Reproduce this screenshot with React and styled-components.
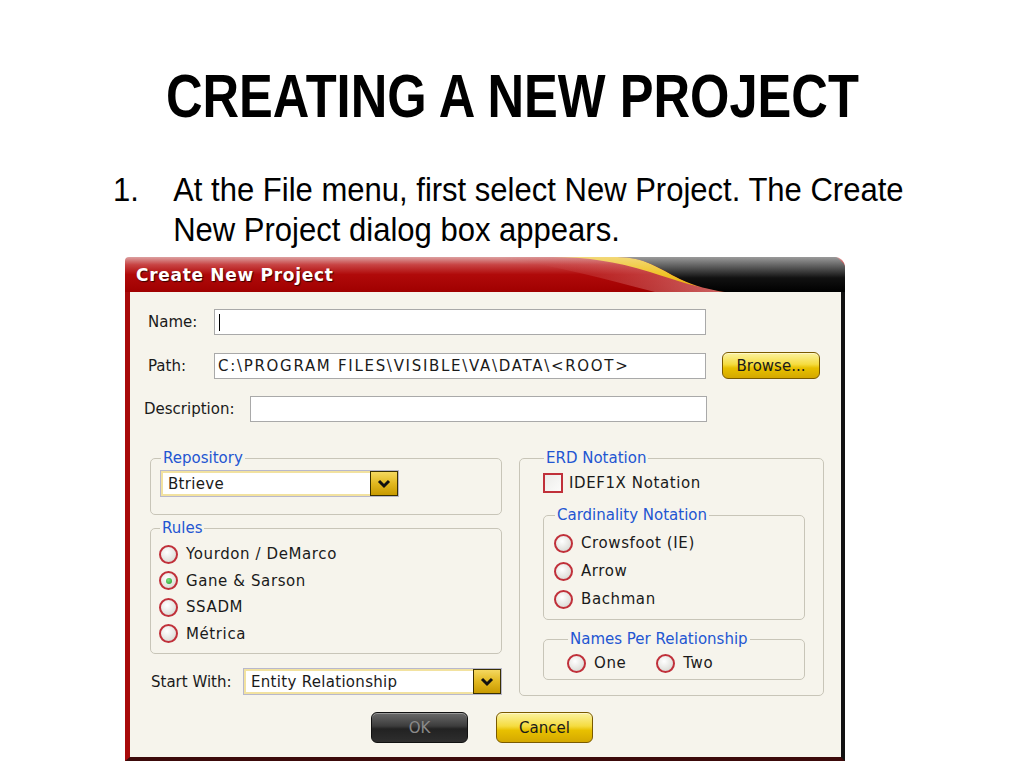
import React from 'react';
import styled, { createGlobalStyle, css } from 'styled-components';

const GlobalStyle = createGlobalStyle`
    body {
        margin: 0;
        background: #ffffff;
    }
`;

const Page = styled.div`
    width: 1024px;
    height: 768px;
    overflow: hidden;
    font-family: "Liberation Sans", Arial, sans-serif;
    color: #000;
`;

const Heading = styled.h1`
    margin: 0;
    padding-top: 60px;
    height: 72px;
    text-align: center;
    font-size: 61px;
    line-height: 72px;
    font-weight: 700;
`;

// the slide font is a narrow one, so the wider Liberation face is squeezed
const Narrow = styled.span`
    display: inline-block;
    transform: scaleX(${p => p.$scale});
    transform-origin: ${p => p.$origin || 'center'};
`;

const Step = styled(Narrow)`
    display: flex;
    margin: 38px 0 0 113px;
    width: 860px;
    font-size: 33px;
    line-height: 40px;
`;

const StepNumber = styled.span`
    width: 64px;
    flex: none;
`;

const Dialog = styled.div`
    width: 720px;
    height: 504px;
    margin: 7px 0 0 125px;
    display: flex;
    flex-direction: column;
    border-radius: 4px 10px 0 0;
    overflow: hidden;
    font-family: "DejaVu Sans", sans-serif;
    font-size: 15px;
    color: #1a1a1a;
`;

const TitleBar = styled.div`
    position: relative;
    height: 35px;
    flex: none;
    background: linear-gradient(#dca0a0 0%, #c84444 22%, #b00a0a 50%, #a00000 100%);
`;

const Swoosh = styled.svg`
    position: absolute;
    inset: 0;
    width: 100%;
    height: 100%;
`;

const TitleText = styled.span`
    position: relative;
    display: block;
    padding: 8px 0 0 11px;
    font-weight: 700;
    font-size: 17px;
    letter-spacing: 0.7px;
    color: #fff;
    text-shadow: 1px 1px 1px #3a0000;
`;

const Body = styled.div`
    flex: 1;
    display: flex;
    flex-direction: column;
    background: #f6f4ec;
    border-left: 5px solid #a80a0a;
    border-right: 4px solid #111;
    border-bottom: 4px solid #3c0a0a;
    padding: 17px 16px 0 13px;
`;

const FieldRow = styled.div`
    display: flex;
    align-items: center;
    margin-bottom: 17px;
    padding-left: ${p => p.$indent || 5}px;
`;

const Label = styled.span`
    width: ${p => p.$width}px;
    flex: none;
`;

const TextBox = styled.div`
    width: ${p => p.$width}px;
    height: 26px;
    box-sizing: border-box;
    border: 1px solid #a9a9a9;
    background: #fff;
    display: flex;
    align-items: center;
    padding-left: 3px;
    font-size: 15px;
    letter-spacing: ${p => p.$spaced ? 1.7 : 0.3}px;
`;

const Caret = styled.span`
    width: 1px;
    height: 17px;
    background: #000;
    margin-left: 1px;
`;

const GoldButton = styled.button`
    box-sizing: border-box;
    width: ${p => p.$width}px;
    height: ${p => p.$height}px;
    margin-left: ${p => p.$ml || 0}px;
    border-radius: 6px;
    font-family: "DejaVu Sans", sans-serif;
    font-size: 15px;
    padding: 0;
    cursor: pointer;
    ${p => p.$dark ? css`
        border: 1px solid #111;
        background: linear-gradient(#6a6a6a 0%, #3c3c3c 45%, #222 55%, #2e2e2e 100%);
        color: #8a8a8a;
        box-shadow: inset 0 1px 0 #999;
    ` : css`
        border: 1px solid #7a5a00;
        background: linear-gradient(#fbf2a0 0%, #f5dc40 45%, #e8c000 60%, #d4a800 100%);
        color: #1a1a1a;
        box-shadow: inset 0 1px 0 #fff8c8;
    `}
`;

const Columns = styled.div`
    display: grid;
    grid-template-columns: 352px 305px;
    column-gap: 17px;
    padding-left: 7px;
    margin-top: 11px;
`;

const Column = styled.div`
    display: flex;
    flex-direction: column;
`;

const Group = styled.fieldset`
    margin: ${p => p.$mt || 0}px 0 0 0;
    padding: ${p => p.$pad || '6px 9px 10px'};
    border: 1px solid #c8c5b8;
    border-radius: 5px;
    min-width: 0;
    height: ${p => p.$height}px;
    box-sizing: border-box;
    display: flex;
    flex-direction: ${p => p.$row ? 'row' : 'column'};
`;

const Legend = styled.legend`
    color: #2356d2;
    padding: 0 2px;
    margin-left: 1px;
    line-height: 16px;
    font-size: 15px;
`;

const Select = styled.div`
    display: flex;
    width: ${p => p.$width}px;
    height: 27px;
    box-sizing: border-box;
    border: 1px solid #b8b8cc;
`;

const SelectValue = styled.div`
    flex: 1;
    display: flex;
    align-items: center;
    padding-left: 5px;
    background: #fff;
    border: 2px solid #f2e2a0;
    border-right: none;
    letter-spacing: 0.3px;
`;

const SelectArrow = styled.div`
    width: 28px;
    flex: none;
    display: flex;
    align-items: center;
    justify-content: center;
    background: linear-gradient(#f4d860 0%, #e2b820 50%, #c89a00 100%);
    border: 1px solid #3a3000;
    box-sizing: border-box;
`;

const Option = styled.label`
    display: flex;
    align-items: center;
    height: ${p => p.$h || 26.5}px;
    letter-spacing: 0.6px;
    margin-right: ${p => p.$mr || 0}px;
`;

const RadioDot = styled.span`
    width: 19px;
    height: 19px;
    box-sizing: border-box;
    border-radius: 50%;
    border: 2px solid #c0303a;
    background: radial-gradient(circle at 40% 35%, #ffffff 0%, #e4e4e0 60%, #cdcdc8 100%);
    margin-right: 8px;
    display: flex;
    align-items: center;
    justify-content: center;
    flex: none;
    &::after {
        content: '';
        width: 6px;
        height: 6px;
        border-radius: 50%;
        background: radial-gradient(circle at 40% 35%, #7ee27e, #1a9a2a);
        display: ${p => p.$checked ? 'block' : 'none'};
    }
`;

const CheckBox = styled.span`
    width: 20px;
    height: 20px;
    box-sizing: border-box;
    border: 2px solid #c0303a;
    background: linear-gradient(135deg, #ececea, #fbfbfa);
    margin-right: 6px;
    flex: none;
`;

const StartRow = styled.div`
    display: flex;
    align-items: center;
    margin-top: 14px;
    padding-left: 1px;
`;

const ButtonRow = styled.div`
    display: flex;
    justify-content: center;
    gap: 28px;
    margin-top: 16px;
    padding-right: 4px;
`;

const Chevron = () => (
    <svg width="14" height="10" viewBox="0 0 14 10">
        <path d="M2 2 L7 7 L12 2" fill="none" stroke="#111" strokeWidth="3" />
    </svg>
);

const Radio = ({ checked, children, h, mr }) => (
    <Option $h={h} $mr={mr}>
        <RadioDot $checked={checked} />
        {children}
    </Option>
);

export default function App() {
    return (
        <Page>
            <GlobalStyle />
            <Heading>
                <Narrow $scale={0.83}>CREATING A NEW PROJECT</Narrow>
            </Heading>
            <Step $scale={0.94} $origin="left">
                <StepNumber>1.</StepNumber>
                <span>At the File menu, first select New Project. The Create<br />New Project dialog box appears.</span>
            </Step>
            <Dialog>
                <TitleBar>
                    <Swoosh viewBox="0 0 720 35" preserveAspectRatio="none">
                        <defs>
                            <linearGradient id="blk" x1="0" y1="0" x2="0" y2="1">
                                <stop offset="0" stopColor="#9a9a9a" />
                                <stop offset="0.6" stopColor="#111" />
                                <stop offset="1" stopColor="#000" />
                            </linearGradient>
                            <linearGradient id="ylw" x1="0" y1="0" x2="0" y2="1">
                                <stop offset="0" stopColor="#f2d878" />
                                <stop offset="0.5" stopColor="#f0c428" />
                                <stop offset="1" stopColor="#e4a400" />
                            </linearGradient>
                            <linearGradient id="pnk" x1="0" y1="0" x2="1" y2="0">
                                <stop offset="0" stopColor="#c84040" stopOpacity="0" />
                                <stop offset="1" stopColor="#e09090" stopOpacity="0.7" />
                            </linearGradient>
                        </defs>
                        <path d="M370 0 L428 0 C470 0 500 8 530 14 C555 22 575 30 600 35 L530 35 C480 22 420 6 370 0 Z" fill="url(#pnk)" />
                        <path d="M428 0 L492 0 C520 0 535 12 555 22 C570 29 585 33 600 35 C575 31 552 24 525 15 C490 4 460 0 428 0 Z" fill="url(#ylw)" />
                        <path d="M492 0 L712 0 L720 8 L720 35 L600 35 C585 33 570 29 555 22 C535 12 520 0 492 0 Z" fill="url(#blk)" />
                    </Swoosh>
                    <TitleText>Create New Project</TitleText>
                </TitleBar>
                <Body>
                    <FieldRow>
                        <Label $width={66}>Name:</Label>
                        <TextBox $width={492}><Caret /></TextBox>
                    </FieldRow>
                    <FieldRow>
                        <Label $width={66}>Path:</Label>
                        <TextBox $width={492} $spaced>C:\PROGRAM FILES\VISIBLE\VA\DATA\&lt;ROOT&gt;</TextBox>
                        <GoldButton $width={98} $height={27} $ml={16}>Browse...</GoldButton>
                    </FieldRow>
                    <FieldRow $indent={1}>
                        <Label $width={106}>Description:</Label>
                        <TextBox $width={457} />
                    </FieldRow>
                    <Columns>
                        <Column>
                            <Group $height={65} $pad="4px 9px 8px">
                                <Legend>Repository</Legend>
                                <Select $width={239}>
                                    <SelectValue>Btrieve</SelectValue>
                                    <SelectArrow><Chevron /></SelectArrow>
                                </Select>
                            </Group>
                            <Group $mt={5} $height={134} $pad="5px 8px 8px">
                                <Legend>Rules</Legend>
                                <Radio>Yourdon / DeMarco</Radio>
                                <Radio checked>Gane &amp; Sarson</Radio>
                                <Radio>SSADM</Radio>
                                <Radio>Métrica</Radio>
                            </Group>
                            <StartRow>
                                <Label $width={92}>Start With:</Label>
                                <Select $width={262}>
                                    <SelectValue>Entity Relationship</SelectValue>
                                    <SelectArrow><Chevron /></SelectArrow>
                                </Select>
                            </StartRow>
                        </Column>
                        <Column>
                            <Group $height={246} $pad="4px 18px 14px 23px">
                                <Legend>ERD Notation</Legend>
                                <Option $h={26}>
                                    <CheckBox />
                                    IDEF1X Notation
                                </Option>
                                <Group $mt={11} $height={113} $pad="6px 8px 8px 10px">
                                    <Legend>Cardinality Notation</Legend>
                                    <Radio h={28}>Crowsfoot (IE)</Radio>
                                    <Radio h={28}>Arrow</Radio>
                                    <Radio h={28}>Bachman</Radio>
                                </Group>
                                <Group $mt={11} $height={49} $pad="4px 8px 0 23px" $row>
                                    <Legend>Names Per Relationship</Legend>
                                    <Radio h={24} mr={30}>One</Radio>
                                    <Radio h={24}>Two</Radio>
                                </Group>
                            </Group>
                        </Column>
                    </Columns>
                    <ButtonRow>
                        <GoldButton $width={97} $height={31} $dark>OK</GoldButton>
                        <GoldButton $width={97} $height={31}>Cancel</GoldButton>
                    </ButtonRow>
                </Body>
            </Dialog>
        </Page>
    );
}
